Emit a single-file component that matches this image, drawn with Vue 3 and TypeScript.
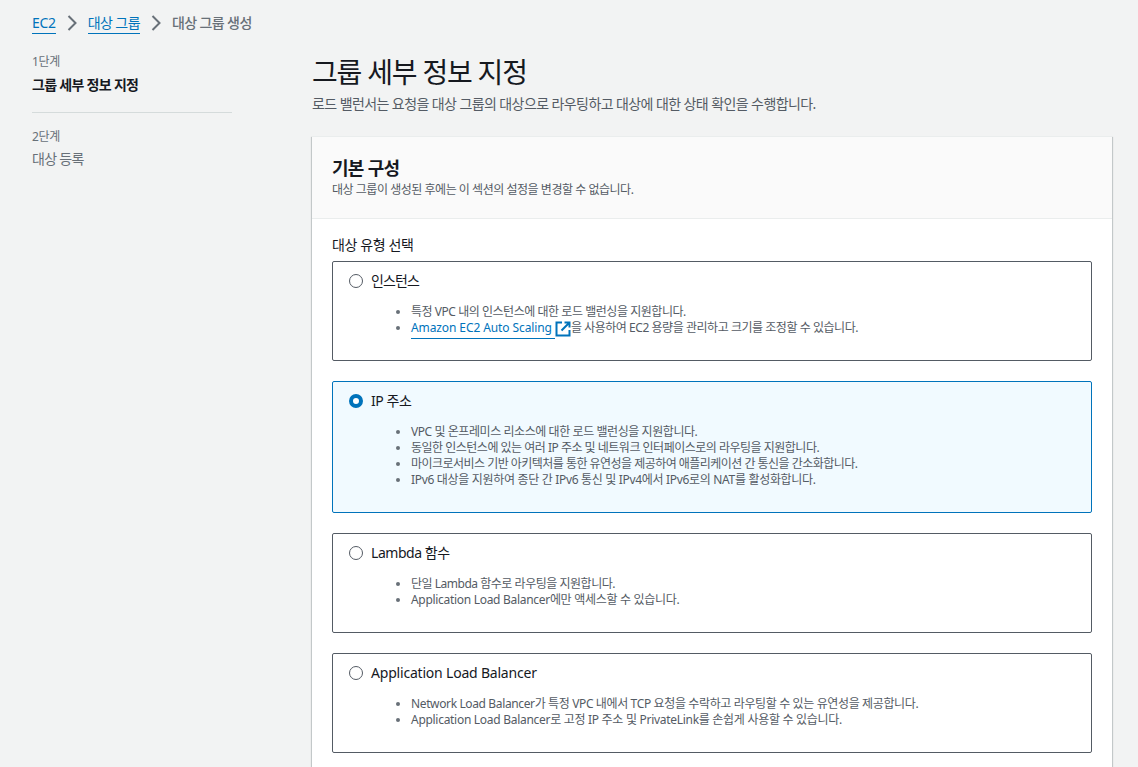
<script setup lang="ts">
interface Part {
  text: string;
  link?: boolean;
}

interface OptionItem {
  parts: Part[];
  spacing: number;
}

interface TargetOption {
  id: string;
  label: string;
  labelSpacing: number;
  items: OptionItem[];
}

const line = (text: string, spacing: number): OptionItem => ({ parts: [{ text }], spacing });

const options: TargetOption[] = [
  {
    id: "instance",
    label: "인스턴스",
    labelSpacing: -0.9,
    items: [
      line("특정 VPC 내의 인스턴스에 대한 로드 밸런싱을 지원합니다.", -0.46),
      {
        parts: [
          { text: "Amazon EC2 Auto Scaling", link: true },
          { text: "을 사용하여 EC2 용량을 관리하고 크기를 조정할 수 있습니다." },
        ],
        spacing: -0.46,
      },
    ],
  },
  {
    id: "ip",
    label: "IP 주소",
    labelSpacing: -0.45,
    items: [
      line("VPC 및 온프레미스 리소스에 대한 로드 밸런싱을 지원합니다.", -0.43),
      line("동일한 인스턴스에 있는 여러 IP 주소 및 네트워크 인터페이스로의 라우팅을 지원합니다.", -0.5),
      line("마이크로서비스 기반 아키텍처를 통한 유연성을 제공하여 애플리케이션 간 통신을 간소화합니다.", -0.53),
      line("IPv6 대상을 지원하여 종단 간 IPv6 통신 및 IPv4에서 IPv6로의 NAT를 활성화합니다.", -0.32),
    ],
  },
  {
    id: "lambda",
    label: "Lambda 함수",
    labelSpacing: -0.45,
    items: [
      line("단일 Lambda 함수로 라우팅을 지원합니다.", -0.48),
      line("Application Load Balancer에만 액세스할 수 있습니다.", -0.3),
    ],
  },
  {
    id: "alb",
    label: "Application Load Balancer",
    labelSpacing: -0.2,
    items: [
      line("Network Load Balancer가 특정 VPC 내에서 TCP 요청을 수락하고 라우팅할 수 있는 유연성을 제공합니다.", -0.37),
      line("Application Load Balancer로 고정 IP 주소 및 PrivateLink를 손쉽게 사용할 수 있습니다.", -0.29),
    ],
  },
];

const selected = "ip";
</script>

<template>
  <div class="page">
    <nav class="crumbs">
      <a class="crumb-link latin">EC2</a>
      <svg class="chevron" viewBox="0 0 16 16"><path d="M4.5 1 11.5 8 4.5 15" /></svg>
      <a class="crumb-link">대상 그룹</a>
      <svg class="chevron" viewBox="0 0 16 16"><path d="M4.5 1 11.5 8 4.5 15" /></svg>
      <span class="crumb-current">대상 그룹 생성</span>
    </nav>

    <div class="layout">
      <aside class="steps">
        <div class="step-no">1단계</div>
        <div class="step-name active">그룹 세부 정보 지정</div>
        <div class="step-sep"></div>
        <div class="step-no">2단계</div>
        <div class="step-name last">대상 등록</div>
      </aside>

      <main class="main">
        <h1 class="title">그룹 세부 정보 지정</h1>
        <p class="desc">로드 밸런서는 요청을 대상 그룹의 대상으로 라우팅하고 대상에 대한 상태 확인을 수행합니다.</p>

        <section class="panel">
          <header class="panel-head">
            <h2 class="panel-title">기본 구성</h2>
            <p class="panel-desc">대상 그룹이 생성된 후에는 이 섹션의 설정을 변경할 수 없습니다.</p>
          </header>
          <div class="panel-body">
            <div class="field-label">대상 유형 선택</div>
            <div class="option-list">
              <div
                v-for="opt in options"
                :key="opt.id"
                class="option"
                :class="{ selected: opt.id === selected }">
                <div class="option-head">
                  <span class="radio"></span>
                  <span class="option-label" :style="{ letterSpacing: opt.labelSpacing + 'px' }">{{ opt.label }}</span>
                </div>
                <ul class="option-items">
                  <li
                    v-for="(item, i) in opt.items"
                    :key="i"
                    :style="{ letterSpacing: item.spacing + 'px' }">
                    <template v-for="(part, j) in item.parts" :key="j">
                      <template v-if="part.link">
                        <a class="ext-link">{{ part.text }}&nbsp;</a>
                        <svg class="ext-icon" viewBox="0 0 16 16">
                          <path d="M7 1.5H1.5v13h13V9" />
                          <path d="M9.5 1.5h5v5M14.5 1.5 6.5 9.5" />
                        </svg>
                      </template>
                      <span v-else>{{ part.text }}</span>
                    </template>
                  </li>
                </ul>
              </div>
            </div>
          </div>
        </section>
      </main>
    </div>
  </div>
</template>

<style>
html,
body {
  margin: 0;
  height: 767px;
  overflow: hidden;
  background: #f2f3f3;
}
</style>

<style scoped>
.page {
  font-family: "Noto Sans", "Noto Sans CJK KR", sans-serif;
  color: #16191f;
  background: #f2f3f3;
  padding: 12px 0 0 32px;
  box-sizing: border-box;
  height: 767px;
  overflow: hidden;
}

.crumbs {
  display: flex;
  align-items: center;
  height: 22px;
  font-size: 14px;
  line-height: 22px;
  letter-spacing: -0.6px;
}

.crumb-link {
  color: #0073bb;
  border-bottom: 1px solid #0073bb;
  height: 20px;
  line-height: 20px;
}

.crumb-link.latin {
  letter-spacing: -0.3px;
}

.crumb-current {
  color: #687078;
  font-weight: 500;
}

.chevron {
  width: 16px;
  height: 16px;
  margin: 0 8px;
  fill: none;
  stroke: #687078;
  stroke-width: 2;
}

.layout {
  display: flex;
}

.steps {
  width: 200px;
  margin-right: 80px;
  padding-top: 20px;
  flex: none;
}

.step-no {
  font-size: 12px;
  line-height: 16px;
  color: #687078;
  letter-spacing: -0.3px;
}

.step-name {
  font-size: 14px;
  line-height: 22px;
  margin-top: 4px;
  color: #687078;
  letter-spacing: -0.7px;
}

.step-name.last {
  margin-top: 3px;
}

.step-name.active {
  color: #16191f;
  font-weight: 700;
  letter-spacing: -0.7px;
}

.step-sep {
  height: 1px;
  background: #d5dbdb;
  margin: 16px 0;
}

.main {
  width: 800px;
  flex: none;
}

.title {
  margin: 20px 0 0;
  font-size: 28px;
  line-height: 36px;
  font-weight: 400;
  color: #16191f;
  letter-spacing: -1.2px;
}

.desc {
  margin: 3px 0 0;
  font-size: 14px;
  line-height: 22px;
  color: #545b64;
  letter-spacing: -0.59px;
}

.panel {
  margin-top: 21px;
  background: #fff;
  box-shadow: 0 1px 1px 0 rgba(0, 28, 36, 0.3), 1px 1px 1px 0 rgba(0, 28, 36, 0.15), -1px 1px 1px 0 rgba(0, 28, 36, 0.15);
  border-top: 1px solid #eaeded;
}

.panel-head {
  background: #fafafa;
  border-bottom: 1px solid #eaeded;
  padding: 19px 20px 0;
  height: 82px;
  box-sizing: border-box;
}

.panel-title {
  margin: 0 0 2px;
  font-size: 18px;
  line-height: 24px;
  font-weight: 700;
  letter-spacing: -0.7px;
}

.panel-desc {
  margin: 0;
  font-size: 12px;
  line-height: 16px;
  color: #545b64;
  letter-spacing: -0.47px;
}

.panel-body {
  padding: 15px 20px 20px;
}

.field-label {
  font-size: 14px;
  line-height: 22px;
  margin-bottom: 5px;
  color: #16191f;
  letter-spacing: -0.4px;
}

.option-list {
  display: flex;
  flex-direction: column;
  gap: 20px;
}

.option {
  border: 1px solid #545b64;
  border-radius: 2px;
  padding: 8px 16px 24px;
  background: #fff;
  box-sizing: border-box;
}

.option.selected {
  border-color: #0073bb;
  background: #f1faff;
}

.option-head {
  display: flex;
  align-items: center;
  height: 22px;
}

.radio {
  width: 14px;
  height: 14px;
  box-sizing: border-box;
  border-radius: 50%;
  border: 1px solid #545b64;
  background: #fff;
  margin-right: 8px;
  flex: none;
}

.selected .radio {
  border: 4px solid #0073bb;
}

.option-label {
  font-size: 14px;
  line-height: 22px;
  color: #16191f;
}

.option-items {
  margin: 12px 0 0;
  padding: 0 0 0 62px;
  list-style: disc;
  font-size: 12px;
  line-height: 16px;
  color: #545b64;
}

.option-items li::marker {
  color: #687078;
}

.ext-link {
  color: #0073bb;
  border-bottom: 1px solid #0073bb;
  padding-bottom: 2px;
  letter-spacing: -0.1px;
}

.ext-icon {
  width: 16px;
  height: 16px;
  margin: -2px 0;
  vertical-align: -3px;
  fill: none;
  stroke: #0073bb;
  stroke-width: 2;
}
</style>
